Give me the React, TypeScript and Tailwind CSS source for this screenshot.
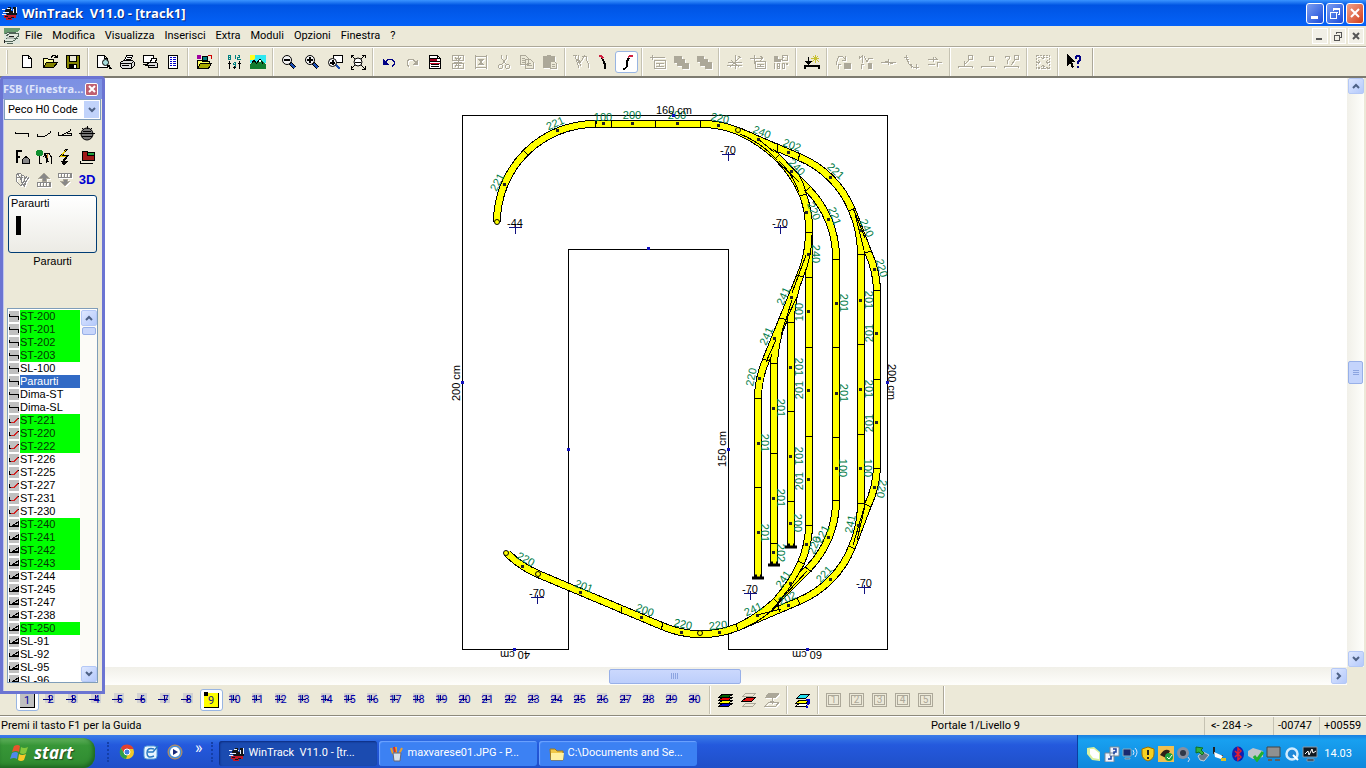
import { Fragment, type ReactNode } from "react";

type IconProps = { children: ReactNode; dim?: boolean };

type Label = [text: string, x: number, y: number, angle: number];

const menus = ["File", "Modifica", "Visualizza", "Inserisci", "Extra", "Moduli", "Opzioni", "Finestra", "?"];

function Icon({ children, dim }: IconProps) {
  return (
    <svg
      viewBox="0 0 16 16"
      aria-hidden
      fill="none"
      shapeRendering="crispEdges"
      className={dim ? "h-4 w-4 text-[#aca899] drop-shadow-[1px_1px_0_white]" : "h-4 w-4 text-black"}
      stroke="currentColor"
    >
      {children}
    </svg>
  );
}

const magnifier = (
  <>
    <path d="M9 9l5 5" stroke="#000" strokeWidth="3" />
    <path d="M10 10l4 4" stroke="#1c4fb4" strokeWidth="2" />
    <circle cx="6" cy="6" r="4.5" fill="#f4f4f4" shapeRendering="auto" />
  </>
);

type Tool = { name: string; icon: ReactNode; dim?: boolean; pressed?: boolean };

const toolGroups: Tool[][] = [
  [
    { name: "Nuovo", icon: <path d="M3.5 1.5h6l3 3v9h-9zM9.5 1.5v3h3" fill="#fff" /> },
    {
      name: "Apri",
      icon: (
        <>
          <path d="M1.5 13.5v-9h4l1 1h5v3" fill="#ffff9c" />
          <path d="M1.5 13.5l3-5h11l-4 5z" fill="#848400" />
          <path d="M9 3.5l2-2h2l2 2m0-3v3h-3" />
        </>
      )
    },
    {
      name: "Salva",
      icon: (
        <>
          <path d="M1.5 1.5h13v13h-12l-1-1z" fill="#848400" />
          <path d="M4.5 2v5h7v-5" fill="#ece9d8" />
          <path d="M4 10h8v4h-8z" fill="#000" stroke="none" />
          <path d="M9 11h2v3h-2z" fill="#fff" stroke="none" />
        </>
      )
    }
  ],
  [
    {
      name: "Anteprima",
      icon: (
        <>
          <path d="M1.5 1.5h7l3 3v9h-10zM8.5 1.5v3h3" fill="#fff" />
          <circle cx="9.5" cy="8.5" r="3" fill="#a6dcdc" shapeRendering="auto" />
          <path d="M12 11l3 4" strokeWidth="2" />
        </>
      )
    },
    {
      name: "Stampa",
      icon: (
        <>
          <path d="M5.5 6.5l2-5h6l-2 5z" fill="#fff" />
          <path d="M1.5 8.5l3-2h9l2 2v3l-3 3h-9l-2-2z" fill="#ddd" />
          <path d="M2 9.5h10v4M8 3.5h4M7 5.5h4M3 11.5h7M12 9.5l3-2" />
        </>
      )
    },
    {
      name: "Stampa finestre",
      icon: (
        <>
          <path d="M1.5 1.5h10v7h-10zM1 10.5h5" fill="#fff" />
          <path d="M8.5 8.5l1-4h5l-1 4z" fill="#fff" />
          <path d="M5.5 9.5l2-1h7l1 1v4h-9zM6 11.5h7M3 11.5h3" fill="#ddd" />
        </>
      )
    },
    {
      name: "Lista",
      icon: (
        <>
          <path d="M3.5 1.5h9v13h-9z" fill="#fff" />
          <path d="M5 3.5h2m1 0h3M5 5.5h2m1 0h3M5 7.5h2m1 0h3M5 9.5h2m1 0h3M5 11.5h2m1 0h3" stroke="#0000c8" />
        </>
      )
    }
  ],
  [
    {
      name: "Libreria",
      icon: (
        <>
          <path d="M1 1h4v4h-4z" fill="#a000a0" stroke="none" />
          <path d="M6.5 2.5h5v4h-5z" fill="#008080" />
          <path d="M12 1.5h3v3" stroke="#d00000" />
          <path d="M1.5 14.5v-8h4l1 1h7v2" fill="#ffff60" />
          <path d="M1.5 14.5l3-5h11l-3 5z" fill="#a8a800" />
        </>
      )
    }
  ],
  [
    {
      name: "Livelli quota",
      icon: (
        <>
          <path d="M1.5 1.5h2v4h-2zM1.5 3.5h2M8.5 1v4M10.5 1.5h2v2h-2v2h3M6.5 8.5h2v4M6.5 8.5v2h2" stroke="#008080" />
          <path d="M2.5 7v8M1 9.5h3M7.5 12v3M6 13.5h3M12.5 7v8M11 9.5h3" />
        </>
      )
    },
    {
      name: "Paesaggio",
      icon: (
        <>
          <path d="M0 1h16v8h-16z" fill="#30e8f0" stroke="none" />
          <path d="M0 1h5v3l-2 2h-3z" fill="#ffff20" stroke="none" />
          <path d="M0 15v-5l4-4 3 3 3-4 6 6v4z" fill="#107c30" stroke="none" />
          <path d="M2 9l2-3 2 3h1l3-4 3 5" />
          <path d="M9 8l1-2 1 2" stroke="#fff" />
        </>
      )
    }
  ],
  [
    { name: "Riduci", icon: <>{magnifier}<path d="M3 6h6" strokeWidth="2" /></> },
    { name: "Ingrandisci", icon: <>{magnifier}<path d="M3 6h6M6 3v6" strokeWidth="2" /></> },
    {
      name: "Zoom finestra",
      icon: (
        <>
          <path d="M6.5 1.5h9v7h-9z" fill="#fff" />
          <path d="M9 11l4 4" stroke="#1c4fb4" strokeWidth="2" />
          <circle cx="5.5" cy="8.5" r="4" fill="#fff" shapeRendering="auto" />
          <path d="M3 8.5h5M5.5 6v5" strokeWidth="2" />
        </>
      )
    },
    {
      name: "Mostra tutto",
      icon: (
        <>
          <path d="M1 4v-3h3M12 1h3v3M15 12v3h-3M4 15h-3v-3M1 1l4 4M15 1l-4 4M1 15l4-4M15 15l-4-4" />
          <circle cx="8" cy="8" r="4" fill="#fff" shapeRendering="auto" />
          <path d="M5 8h6" />
        </>
      )
    }
  ],
  [
    {
      name: "Annulla",
      icon: (
        <>
          <path d="M4 8.5l3-3h4l2 2v3l-2 2" stroke="#000084" />
          <path d="M2 5v6h6z" fill="#000084" stroke="none" />
        </>
      )
    },
    {
      name: "Ripeti",
      dim: true,
      icon: (
        <>
          <path d="M12 8.5l-3-3h-4l-2 2v3l2 2" />
          <path d="M14 5v6h-6z" fill="#aca899" stroke="none" />
        </>
      )
    },
    {
      name: "Proprietà",
      icon: (
        <>
          <path d="M2.5 1.5h8l3 3v10h-11z" fill="#fff" />
          <path d="M3 4h7v3h3v1h-10z" fill="#a00020" stroke="none" />
          <path d="M3 4.5h7M3 7.5h10M4 10.5h8M4 12.5h8M10.5 1.5v3h3" />
          <path d="M3 9h10" stroke="#c00020" />
        </>
      )
    },
    {
      name: "Unisci",
      dim: true,
      icon: <path d="M2.5 1.5h11v5h-11zM2.5 9.5h11v5h-11zM8 1v14M4 8h8M5 4.5h6M5 11.5h6M5 3l2 3M11 3l-2 3M5 13l2-3" />
    },
    {
      name: "Separa",
      dim: true,
      icon: <path d="M2.5 1v14M13.5 1v14M2 2.5h12M2 13.5h12M5 5.5h6M5 10.5h6M6 5l4 6M10 5l-4 6M8 5v6" />
    },
    {
      name: "Taglia",
      dim: true,
      icon: <><path d="M5.5 1v3l5 7M10.5 1v3l-5 7" /><circle cx="4.5" cy="12.5" r="2" /><circle cx="11.5" cy="12.5" r="2" /></>
    },
    {
      name: "Copia",
      dim: true,
      icon: <path d="M1.5 1.5h5l3 3v6h-8zM6.5 5.5h5l3 3v6h-8zM3 4.5h3M3 6.5h3M3 8.5h3M8 9.5h4M8 11.5h5" fill="#ece9d8" />
    },
    {
      name: "Incolla",
      dim: true,
      icon: (
        <>
          <path d="M1.5 2.5h11v11h-11zM5 1.5h4" fill="#aca899" />
          <path d="M8.5 7.5h4l2 2v5h-6zM10 10.5h3M10 12.5h3" fill="#ece9d8" />
        </>
      )
    }
  ],
  [
    { name: "Diramazioni", dim: true, icon: <path d="M0 1.5h4M2 2l4 12M5 1v3l2 5 5-8M9 2.5h4M13.5 2v4l2 4v4M4 5l4 7" /> },
    {
      name: "Curva a destra",
      icon: <><path d="M6 4l2 4 1 3v4" strokeWidth="2" /><path d="M3 1.5h2l2 3" stroke="#d02040" strokeWidth="2" /></>
    },
    {
      name: "Curva flessibile",
      pressed: true,
      icon: <><path d="M4 14.5h2l2-2v-5l2-4" strokeWidth="2" /><path d="M9 3l2-1h3" stroke="#d02040" strokeWidth="2" /></>
    }
  ],
  [
    { name: "Quota", dim: true, icon: <path d="M0 3.5h15M2 1v5M4.5 6.5h11v8h-11zM6 9.5h8M6 12.5h8M9.5 9v3" /> },
    { name: "Porta avanti", dim: true, icon: <path d="M1 2h7v6h-7zM4 5h7v6h-7zM9 9h6v5h-6z" fill="#aca899" /> },
    { name: "Porta indietro", dim: true, icon: <path d="M1 2h6v5h-6zM4 5h7v6h-7zM9 8h6v6h-6z" fill="#aca899" /> }
  ],
  [
    { name: "Sposta", dim: true, icon: <path d="M0 11.5h15M8.5 1v14M1 8h14M3 13l10-10M4 6l8 7M11 2l3 2" /> },
    { name: "Sposta campo", dim: true, icon: <path d="M0 4.5h12M4.5 1v9M10 2l3 2-3 3M5.5 7.5h10v7h-10zM7 10.5h7M7 12.5h7M10.5 10v3" /> },
    {
      name: "Ruota di 180 gradi",
      dim: true,
      icon: (
        <>
          <path d="M1 2h3v3h3v2h-6z" fill="#aca899" />
          <path d="M9.5 1.5h5v5h-5zM8 6l3-3M1.5 9v6M4.5 9.5h2v5h-2zM4.5 12h2M9.5 9.5h2v5h-2zM13.5 9.5h1v1h-1z" />
        </>
      )
    }
  ],
  [
    {
      name: "Nuova quota binario",
      icon: (
        <>
          <path d="M1 15v-3h14v3" strokeWidth="2" />
          <path d="M4.5 3v7" />
          <path d="M1 7h7l-3.5 4z" fill="#000" stroke="none" />
          <path d="M11.5 1v8M7 4.5h8M9 2l6 6M14 2l-6 6" stroke="#c8c030" />
        </>
      )
    }
  ],
  [
    {
      name: "Rampa",
      dim: true,
      icon: (
        <>
          <path d="M1 11v-2l3-7h3l3 3M10 2v4h-3M3 15v-5h3" />
          <path d="M9 9h6v5h-6z" fill="#aca899" />
        </>
      )
    },
    {
      name: "Rampa doppia",
      dim: true,
      icon: <><path d="M1 2v3l3-3v7M6 2l3 6 2-4h4M3 15v-5h3" /><path d="M10 9h3v5h-3z" fill="#aca899" /></>
    },
    { name: "Inserisci giunto", dim: true, icon: <path d="M0 8.5h15M7.5 5v6M4 7.5h3M9 9.5h3" /> },
    { name: "Curva nodo", dim: true, icon: <path d="M2 1v4h3M3 5l2 5 4 3h6M7 10v4M12 10v5M0 3.5h4" /> },
    { name: "Allinea", dim: true, icon: <path d="M1 5.5h9M6 3v5M1 10.5h7M10 8v5M11 8.5h4M8 3l3 3" /> }
  ],
  [
    { name: "Nodo agganciato", dim: true, icon: <path d="M0.5 14v-2h14v2M10.5 1.5h4v4h-4zM11 6l-5 5M6 7v5h5" /> },
    { name: "Nodo libero", dim: true, icon: <path d="M0.5 14v-2h14v2M8.5 2.5h4v4h-4z" /> },
    { name: "Nodo ignoto", dim: true, icon: <path d="M0.5 14v-2h14v2M10.5 1.5h4v4h-4zM1 4v-2h4v3l-2 2v3M11 6l-4 5" /> }
  ],
  [
    {
      name: "Centra",
      dim: true,
      icon: (
        <>
          <path d="M1.5 1.5h13v13h-13z" strokeDasharray="2 1" />
          <path d="M8 1v4M8 11v4M1 8h4M11 8h4M6 3l2 2 2-2M6 13l2-2 2 2M3 6l2 2-2 2M13 6l-2 2 2 2M3 3h2M11 3h2M3 13h2M11 13h2" />
        </>
      )
    }
  ],
  [
    {
      name: "Guida rapida",
      icon: (
        <>
          <path d="M1 0v12l3-3 2 5 2-1-2-5h4z" fill="#000" stroke="none" />
          <path d="M10 5v-2l1-1h2l1 1v3l-2 2v2M12 12v2" stroke="#000084" strokeWidth="2" />
        </>
      )
    }
  ]
];

function Separator() {
  return <span className="mx-[3px] h-7 w-0.5 shrink-0 border-r border-l border-r-white border-l-[#c5c2b2]" />;
}

function ToolButton({ tool }: { tool: Tool }) {
  return (
    <button
      type="button"
      aria-label={tool.name}
      disabled={tool.dim}
      className={
        tool.pressed
          ? "flex h-[22px] w-[23px] shrink-0 items-center justify-center rounded-[3px] border border-[#98b5e2] bg-white"
          : "flex h-[22px] w-[23px] shrink-0 items-center justify-center"
      }
    >
      <Icon dim={tool.dim}>{tool.icon}</Icon>
    </button>
  );
}

function AppLogo() {
  return (
    <svg viewBox="0 0 16 16" className="h-4 w-4 shrink-0" aria-hidden shapeRendering="crispEdges">
      <path d="M3 5l3-3h3v4h2v-4h4v8h-9l-3-2z" fill="#101418" />
      <path d="M0 4.5h3M1 7.5h6M0 9.5h4M11.5 4v4M14.5 2v6M9 4.5h1M5 3.5h3" stroke="#e8f0ff" fill="none" />
      <path d="M2 10h12v3h-4v2h-6v-2h-2z" fill="#c01828" />
      <path d="M3 11.5h3M9 12.5h3M6 13.5h3" stroke="#181018" />
    </svg>
  );
}

function TitleBar() {
  return (
    <header className="flex h-[26px] shrink-0 items-center bg-linear-to-b from-[#3a94ff] via-[#0054e3] via-20% to-[#0562f8] pr-0.5 pl-0.5">
      <AppLogo />
      <h1 className="ml-1 whitespace-pre font-['Open_Sans','Noto_Sans',sans-serif] text-[13px] leading-5 font-bold text-white [text-shadow:1px_1px_0_#0a2a80]">
        {"WinTrack  V11.0 - [track1]"}
      </h1>
      <div className="ml-auto flex gap-0.5">
        <button type="button" aria-label="Riduci a icona" className="flex h-[21px] w-[18px] items-end rounded-[3px] border border-white bg-linear-to-br from-[#7c9df0] to-[#1c48d8] p-1">
          <span className="h-[3px] w-[7px] bg-white" />
        </button>
        <button type="button" aria-label="Ripristina" className="flex h-[21px] w-[18px] items-center justify-center rounded-[3px] border border-white bg-linear-to-br from-[#7c9df0] to-[#1c48d8]">
          <svg viewBox="0 0 12 12" className="h-3 w-3" fill="none" stroke="#fff" shapeRendering="crispEdges">
            <path d="M4 1.5h7M4 2.5h7M4.5 1v3M10.5 2v5h-2M1 5h7.5M1.5 5v6h6v-6" />
          </svg>
        </button>
        <button type="button" aria-label="Chiudi" className="flex h-[21px] w-[18px] items-center justify-center rounded-[3px] border border-white bg-linear-to-br from-[#f0a088] to-[#d03a10]">
          <svg viewBox="0 0 12 12" className="h-3 w-3" stroke="#fff" strokeWidth="2">
            <path d="M2 2l8 8M10 2l-8 8" />
          </svg>
        </button>
      </div>
    </header>
  );
}

function MenuBar() {
  return (
    <nav className="flex h-[21px] shrink-0 items-center border-b border-[#aca899] pl-1">
      <svg viewBox="0 0 16 16" className="h-4 w-4 shrink-0" aria-hidden shapeRendering="crispEdges">
        <path d="M0 0h16v16h-16z" fill="#dfe6dc" />
        <path d="M0 0h16v2l-3 2h-9l-4 2z" fill="#6a9c70" />
        <path d="M1 6l4-2h7M2 8l5-3h7l1 3-5 3-8-1M1 13h8l5-3M3 15h6" stroke="#506458" fill="none" />
        <path d="M3 9h7v2h-7z" fill="#b4bcb4" />
        <path d="M0 15v-3M5 8h5" stroke="#202020" />
      </svg>
      {menus.map((menu) => (
        <button key={menu} type="button" className="h-5 px-[5px] text-[11px] leading-5">
          {menu}
        </button>
      ))}
      <div className="ml-auto flex gap-0.5 pr-0.5">
        <button type="button" aria-label="Riduci documento" className="flex h-4 w-4 items-end border border-white bg-[#f1efe6] p-[3px]">
          <span className="h-0.5 w-1.5 bg-[#555]" />
        </button>
        <button type="button" aria-label="Ripristina documento" className="flex h-4 w-4 items-center justify-center border border-white bg-[#f1efe6]">
          <svg viewBox="0 0 12 12" className="h-3 w-3" fill="none" stroke="#555" shapeRendering="crispEdges">
            <path d="M4 2.5h6M4.5 2v2M9.5 2v5h-2M2 5.5h6M2.5 5v5h5v-5" />
          </svg>
        </button>
        <button type="button" aria-label="Chiudi documento" className="flex h-4 w-4 items-center justify-center border border-white bg-[#f1efe6]">
          <svg viewBox="0 0 12 12" className="h-3 w-3" stroke="#555" strokeWidth="2">
            <path d="M3 3l6 6M9 3l-6 6" />
          </svg>
        </button>
      </div>
    </nav>
  );
}

// Closed outline of the U-shaped baseboard
const board = "M462.5 115.5H887.5V649.5H728.5V249.5H568.5V649.5H462.5Z";

const tracks = [
  "M497 222A98 98 0 0 1 595 124H701A98 98 0 0 1 738 131",
  "M777 157Q794 174 803 195A98 98 0 0 1 809 232",
  "M738 131Q760 141 777 157L808 189A98 98 0 0 1 836 258",
  "M738 131L799 157A98 98 0 0 1 852 210",
  "M852 210Q861 231 861 255",
  "M852 210L868 252A98 98 0 0 1 877 289V468A98 98 0 0 1 868 505",
  "M861 503Q861 527 852 547",
  "M868 505L852 547",
  "M809 232V277",
  "M791 322Q791 298 800 276",
  "M774 363Q775 339 784 319",
  "M809 232Q809 256 800 276L766 360A98 98 0 0 0 758 398",
  "M758 398V579",
  "M774 363V565",
  "M791 322V547",
  "M809 277V525A98 98 0 0 1 801 563Q792 583 776 601",
  "M861 254V503",
  "M836 258V499A98 98 0 0 1 808 569L776 601Q759 617 738 627",
  "M852 547A98 98 0 0 1 799 601L738 627A98 98 0 0 1 662 626L538 574A98 98 0 0 1 507 553"
];

// Rail edges that stay visible where the points overlap
const switchLines =
  "M738 127L779 145M740 134Q762 143 777 160M757 138L774 152M777 161L799 182M779 161Q792 173 799 192M797 172Q804 182 806 193M853 208L865 238M855 214L864 250M812 235Q812 256 803 278M806 255L792 293M797 297L787 318M792 300L781 335M776 340L766 362M864 508L853 545M865 506L857 540M803 566Q794 584 778 602M807 571L775 606M740 630Q765 619 779 604M757 615L781 609";

const joints =
  "M595 120v8M597 121l-2 6M611 120v8M655 120v8M700 120v8M523 150l6 6M778 145l-1 7M800 153l-2 7M774 160l6-6M805 192l6-6M849 211l6-3M864 253l8-2M873 290h8M799 196l8-2M805 232h8M832 259h8M857 254h8M805 277h8M796 275l8 2M780 318l8 2M762 359l8 2M754 398h8M787 322h8M770 363h8M754 487h8M770 453h8M770 543h8M787 411h8M787 501h8M805 347h8M805 436h8M805 525h8M832 347h8M832 437h8M832 500h8M857 344h8M857 434h8M857 503h8M873 379h8M873 468h8M864 504l8 3M848 546l8 3M797 561l8 3M805 567l7 5M773 598l6 6M797 598l3 6M778 606l2 6M736 623l2 7M661 630l2-7M621 614l1-7";

const sensors: [number, number][] = [
  [504, 184], [557, 130], [603, 123], [632, 123], [677, 123], [718, 125], [758, 139], [788, 152], [830, 177],
  [791, 171], [828, 219], [806, 212], [808, 254], [860, 230], [874, 269], [791, 297], [808, 311], [774, 338],
  [759, 378], [758, 443], [758, 532], [773, 408], [773, 498], [773, 552], [790, 367], [790, 456], [790, 523],
  [808, 390], [808, 479], [806, 544], [836, 303], [836, 393], [836, 468], [828, 537], [860, 300], [860, 389],
  [860, 468], [876, 333], [876, 422], [874, 487], [858, 525], [830, 579], [790, 583], [788, 605], [757, 615],
  [719, 632], [681, 632], [641, 617], [580, 592], [522, 566]
];

const openEnds: [number, number][] = [[497, 222], [738, 130], [506, 553], [538, 574], [700, 633]];

const partLabels: Label[] = [
  ["221", 497, 182, -62],
  ["221", 555, 123, -24],
  ["100", 603, 117, 0],
  ["200", 632, 115, 0],
  ["200", 677, 115, 0],
  ["220", 720, 118, 12],
  ["240", 762, 132, 22],
  ["202", 792, 145, 20],
  ["221", 836, 171, 42],
  ["240", 797, 167, 45],
  ["221", 835, 216, 70],
  ["220", 814, 211, 68],
  ["240", 867, 228, 65],
  ["220", 882, 268, 75],
  ["240", 816, 254, 90],
  ["241", 783, 296, -66],
  ["241", 766, 336, -66],
  ["220", 751, 377, -78],
  ["100", 799, 312, -90],
  ["201", 844, 303, 90],
  ["201", 869, 300, 90],
  ["201", 869, 333, -90],
  ["201", 799, 367, 90],
  ["201", 799, 390, -90],
  ["201", 844, 393, 90],
  ["201", 869, 389, 90],
  ["201", 869, 423, -90],
  ["201", 781, 408, 90],
  ["201", 765, 443, 90],
  ["201", 799, 456, 90],
  ["201", 799, 481, -90],
  ["100", 843, 468, 90],
  ["100", 868, 468, 90],
  ["220", 882, 489, 100],
  ["201", 781, 498, 90],
  ["200", 798, 523, 90],
  ["241", 850, 524, -78],
  ["201", 765, 533, 90],
  ["202", 781, 553, 90],
  ["221", 822, 534, -64],
  ["220", 814, 545, -68],
  ["221", 824, 574, -48],
  ["241", 783, 579, -56],
  ["202", 787, 598, -25],
  ["241", 753, 609, -25],
  ["220", 718, 625, -6],
  ["220", 683, 624, 12],
  ["200", 645, 610, 20],
  ["201", 584, 586, 20],
  ["220", 526, 559, 28]
];

const boardLabels: Label[] = [
  ["160 cm", 674, 110, 0],
  ["200 cm", 456, 383, -90],
  ["200 cm", 892, 382, 90],
  ["150 cm", 722, 449, -90],
  ["40 cm", 515, 655, 180],
  ["60 cm", 807, 655, 180]
];

const boardHandles: [number, number][] = [
  [673, 115], [462, 382], [887, 382], [728, 449], [568, 449], [648, 248], [514, 649], [807, 649]
];

const heights: [string, number, number][] = [
  ["-44", 515, 227],
  ["-70", 728, 154],
  ["-70", 780, 227],
  ["-70", 537, 597],
  ["-70", 750, 593],
  ["-70", 864, 587]
];

const bumpers: [number, number][] = [[758, 578], [774, 565], [791, 547]];

function PlanLabel({ label: [text, x, y, angle] }: { label: Label }) {
  return (
    <text x={x} y={y + 4} textAnchor="middle" transform={`rotate(${angle} ${x} ${y})`}>
      {text}
    </text>
  );
}

function TrackPlan() {
  return (
    <svg
      viewBox="0 78 1347 589"
      role="img"
      aria-label="Piano binari"
      className="min-h-0 w-full min-w-0 flex-1 font-['Liberation_Sans',Arial,sans-serif] text-[11px]"
    >
      <path d={board} fill="none" stroke="#000" shapeRendering="crispEdges" />
      <g fill="none" shapeRendering="crispEdges">
        {tracks.map((d) => (
          <path key={d} d={d} stroke="#000" strokeWidth="8" />
        ))}
        {tracks.map((d) => (
          <path key={d} d={d} stroke="#ff0" strokeWidth="6" />
        ))}
        <path d={switchLines} stroke="#000" />
        <path d={joints} stroke="#000" />
      </g>
      {sensors.map(([x, y]) => (
        <rect key={`${x}-${y}`} x={x - 1} y={y - 1} width="3" height="3" fill="#222" shapeRendering="crispEdges" />
      ))}
      {openEnds.map(([x, y]) => (
        <circle key={`${x}-${y}`} cx={x} cy={y} r="2.5" fill="#ff0" stroke="#000" />
      ))}
      {bumpers.map(([x, y]) => (
        <path key={x} d={`M${x - 6} ${y}h12M${x - 3} ${y - 2}h2M${x + 2} ${y - 2}h2`} stroke="#000" strokeWidth="3" />
      ))}
      <g fill="#007b46">
        {partLabels.map((label) => (
          <PlanLabel key={label.join()} label={label} />
        ))}
      </g>
      {boardLabels.map((label) => (
        <PlanLabel key={label.join()} label={label} />
      ))}
      {boardHandles.map(([x, y]) => (
        <rect key={`${x}-${y}`} x={x - 1} y={y - 1} width="3" height="3" fill="#1010c0" />
      ))}
      {heights.map(([text, x, y]) => (
        <Fragment key={`${x}-${y}`}>
          <text x={x} y={y} textAnchor="middle">{text}</text>
          <path d={`M${x - 6} ${y + 0.5}h13M${x + 0.5} ${y - 2}v9`} stroke="#101080" shapeRendering="crispEdges" />
        </Fragment>
      ))}
    </svg>
  );
}

const chevrons = {
  up: "M2 7l3-3 3 3",
  down: "M2 3l3 3 3-3",
  right: "M3 2l3 3-3 3"
};

function ScrollArrow({ name, dir }: { name: string; dir: keyof typeof chevrons }) {
  return (
    <button
      type="button"
      aria-label={name}
      className="flex h-4 w-4 shrink-0 items-center justify-center rounded-[2px] border border-[#b4c8f6] bg-linear-to-br from-[#dfe8ff] to-[#b4c9fb]"
    >
      <svg viewBox="0 0 10 10" className="h-2.5 w-2.5" fill="none" stroke="#4d6185" strokeWidth="2">
        <path d={chevrons[dir]} />
      </svg>
    </button>
  );
}

type Part = { name: string; kind: "straight" | "curve" | "points"; used?: boolean };

const parts: Part[] = [
  { name: "ST-200", kind: "straight", used: true },
  { name: "ST-201", kind: "straight", used: true },
  { name: "ST-202", kind: "straight", used: true },
  { name: "ST-203", kind: "straight", used: true },
  { name: "SL-100", kind: "straight" },
  { name: "Paraurti", kind: "straight" },
  { name: "Dima-ST", kind: "straight" },
  { name: "Dima-SL", kind: "straight" },
  { name: "ST-221", kind: "curve", used: true },
  { name: "ST-220", kind: "curve", used: true },
  { name: "ST-222", kind: "curve", used: true },
  { name: "ST-226", kind: "curve" },
  { name: "ST-225", kind: "curve" },
  { name: "ST-227", kind: "curve" },
  { name: "ST-231", kind: "curve" },
  { name: "ST-230", kind: "curve" },
  { name: "ST-240", kind: "points", used: true },
  { name: "ST-241", kind: "points", used: true },
  { name: "ST-242", kind: "points", used: true },
  { name: "ST-243", kind: "points", used: true },
  { name: "ST-244", kind: "points" },
  { name: "ST-245", kind: "points" },
  { name: "ST-247", kind: "points" },
  { name: "ST-238", kind: "points" },
  { name: "ST-250", kind: "points", used: true },
  { name: "SL-91", kind: "points" },
  { name: "SL-92", kind: "points" },
  { name: "SL-95", kind: "points" },
  { name: "SL-96", kind: "points" }
];

function rowColors(part: Part) {
  if (part.name === "Paraurti") return "min-w-0 flex-1 bg-[#316ac5] text-white";
  if (part.used) return "min-w-0 flex-1 bg-[#00ff00] text-[#053805]";
  return "min-w-0 flex-1 text-black";
}

function PartIcon({ kind }: { kind: Part["kind"] }) {
  return (
    <svg viewBox="0 0 11 13" className="h-[13px] w-[11px] shrink-0" aria-hidden fill="none" stroke="#000" shapeRendering="crispEdges">
      <path d="M0 1h10v11h-10z" fill="#c0c0c0" stroke="none" />
      {kind === "straight" && <path d="M0.5 4v2.5h9v3" />}
      {kind === "curve" && (
        <>
          <path d="M0.5 5v3.5h3M8 4.5h2" />
          <path d="M2 8.5h3l4-4" stroke="#d02020" />
        </>
      )}
      {kind === "points" && <path d="M0.5 5v3.5h9M9.5 3v6M3 8l6-4M5 7.5h4" />}
    </svg>
  );
}

const paletteIcons: Tool[] = [
  { name: "Binari diritti", icon: <path d="M1 5.5v2h13v3" /> },
  { name: "Binari curvi", icon: <path d="M1.5 8v2.5h7l6-4v-2" /> },
  { name: "Scambi", icon: <path d="M1.5 6v3.5h13v-3M5 9l8-4v-2M10 7.5h4" /> },
  {
    name: "Piattaforme",
    icon: <><circle cx="8" cy="8" r="6" fill="#777" shapeRendering="auto" /><path d="M0 7.5h16M3 10.5h10M8 0v3M3 2l2 2M13 2l-2 2M4 5.5h8" /></>
  },
  {
    name: "Edifici",
    icon: <><path d="M2.5 14v-12h5M2 7.5h4" strokeWidth="2" /><path d="M8.5 14.5v-4l3.5-3 3.5 3v4z" fill="#888" /></>
  },
  {
    name: "Vegetazione",
    icon: (
      <>
        <path d="M3.5 7v7h2M8 4.5h5l2 3v7M9.5 4l-2 4M10.5 9v5" />
        <path d="M9 5l3 8" strokeWidth="2" />
        <circle cx="3.5" cy="4" r="3.5" fill="#109030" stroke="none" />
        <path d="M11.5 5v4" stroke="#d08020" />
      </>
    )
  },
  {
    name: "Elettrico",
    icon: (
      <>
        <path d="M10 0L4 7h6l-4 6" strokeWidth="2" />
        <path d="M9 1L4 7h5" stroke="#f0d000" />
        <path d="M4 12h7l-4 4z" fill="#000" />
      </>
    )
  },
  {
    name: "Veicoli",
    icon: (
      <>
        <path d="M3 2h5v4h7v5h-12z" fill="#a01818" />
        <path d="M8 3h7v3h-7z" fill="#20a040" />
        <path d="M1 14.5h13M1 12v3" />
      </>
    )
  },
  { name: "Disegno", dim: true, icon: <path d="M2 3l3-2 5 3v6l-3 4-5-5zM4 2l4 8M3 6l6-1M7 2v9M9 14l6-9M8 12l5-8M13 8l-3 7" stroke="#888" /> },
  { name: "Alza", dim: true, icon: <><path d="M8 1l5 5h-3v3h-4v-3h-3z" fill="#888" /><path d="M1.5 10.5h13v4h-13zM4 11v3M7 11v3M10 11v3M13 11v3" stroke="#888" /></> },
  { name: "Abbassa", dim: true, icon: <><path d="M8 14l5-5h-3v-2h-4v2h-3z" fill="#888" /><path d="M1.5 1.5h13v4h-13zM4 2v3M7 2v3M10 2v3M13 2v3" stroke="#888" /></> }
];

function PartsWindow() {
  return (
    <aside className="absolute -top-0.5 left-0 flex h-[618px] w-[105px] flex-col rounded-t-[4px] border-[3px] border-[#6b74d2] bg-[#ece9d8] shadow-[inset_1px_0_0_#c0c6f0]">
      <div className="flex h-5 shrink-0 items-center justify-between bg-linear-to-b from-[#7c90e4] to-[#8296e0] pr-1">
        <h2 className="whitespace-nowrap font-['Open_Sans','Noto_Sans',sans-serif] text-[11px] leading-5 font-bold text-[#dfe5fb]">
          FSB (Finestra...
        </h2>
        <button type="button" aria-label="Chiudi FSB" className="flex h-[13px] w-[13px] shrink-0 items-center justify-center rounded-[2px] border border-white bg-[#c06070]">
          <svg viewBox="0 0 10 10" className="h-2.5 w-2.5" stroke="#fff" strokeWidth="2">
            <path d="M2 2l6 6M8 2l-6 6" />
          </svg>
        </button>
      </div>
      <div className="relative mx-px shrink-0">
        <select
          aria-label="Catalogo"
          className="block h-[21px] w-full appearance-none border border-[#7f9db9] bg-white pl-[3px] text-[11px] leading-[19px] outline-none"
        >
          <option>Peco H0 Code</option>
        </select>
        <span className="pointer-events-none absolute top-0.5 right-0.5 flex h-[17px] w-[15px] items-center justify-center bg-[#c1d3fb]">
          <svg viewBox="0 0 10 10" className="h-2.5 w-2.5" fill="none" stroke="#4d6185" strokeWidth="2">
            <path d={chevrons.down} />
          </svg>
        </span>
      </div>
      <div className="mt-0.5 mr-1 ml-2 grid shrink-0 grid-cols-4">
        {paletteIcons.map((tool) => (
          <button key={tool.name} type="button" aria-label={tool.name} className="flex h-[23px] items-center justify-center">
            <Icon dim={tool.dim}>{tool.icon}</Icon>
          </button>
        ))}
        <button type="button" className="flex h-[23px] items-center justify-center font-['Liberation_Sans',Arial,sans-serif] text-[13px] font-bold text-[#0000d0]">
          3D
        </button>
      </div>
      <button
        type="button"
        className="mx-[5px] mt-1 flex h-[58px] shrink-0 flex-col items-start rounded-[3px] border border-[#003c74] bg-linear-to-b from-white to-[#ecebe5] px-0.5 font-['Liberation_Sans',Arial,sans-serif] text-[11px] leading-[14px]"
      >
        Paraurti
        <span className="mt-1.5 ml-[5px] h-[19px] w-[5px] bg-black" />
      </button>
      <p className="shrink-0 pt-px text-center font-['Liberation_Sans',Arial,sans-serif] text-[11px] leading-[14px]">Paraurti</p>
      <div className="mx-1 mt-auto mb-2 flex h-[375px] shrink-0 border border-[#7f9db9] bg-white pt-px">
        <ul className="min-w-0 flex-1 overflow-hidden font-['Liberation_Sans',Arial,sans-serif] text-[11px] leading-[13px]">
          {parts.map((part) => (
            <li key={part.name} className="flex h-[13px] pl-px">
              <PartIcon kind={part.kind} />
              <span className={rowColors(part)}>{part.name}</span>
            </li>
          ))}
        </ul>
        <div className="flex w-[17px] flex-col items-center bg-[#fcfbf7]">
          <ScrollArrow name="Scorri elenco su" dir="up" />
          <span className="mt-px h-2 w-3.5 rounded-[2px] border border-[#98b0e8] bg-[#c8d6fb]" />
          <span className="flex-1" />
          <ScrollArrow name="Scorri elenco giù" dir="down" />
        </div>
      </div>
    </aside>
  );
}

const levels = Array.from({ length: 30 }, (_, index) => index + 1);

function LevelButton({ level }: { level: number }) {
  if (level === 9) {
    return (
      <button type="button" aria-pressed="true" className="relative flex h-[22px] w-[23px] shrink-0 items-center justify-center rounded-[3px] border border-[#98b5e2] bg-white">
        <span className="h-[15px] w-[15px] border-r border-b border-black bg-[#ffff00] text-[11px] leading-[15px] text-[#202080]">9</span>
        <span className="absolute top-0.5 left-[3px] h-1 w-1 bg-black" />
      </button>
    );
  }
  if (level === 1) {
    return (
      <button type="button" className="flex h-[22px] w-[23px] shrink-0 items-center justify-center rounded-[3px] border border-[#98b5e2] bg-white">
        <span className="h-[15px] w-[15px] border-r border-b border-black bg-[#c0c0c0] text-[11px] leading-[15px] text-[#0000a0]">1</span>
      </button>
    );
  }
  return (
    <button type="button" className="relative flex h-[22px] w-[23px] shrink-0 items-center justify-center text-[11px] leading-[22px] text-[#0000a8]">
      <span className="absolute top-1 left-1.5 h-2.5 w-2.5 bg-[#d2d1d2]" />
      <span className={level < 10 ? "absolute top-2.5 left-1 h-px w-2.5 bg-[#000080]" : "absolute top-2.5 left-1.5 h-px w-2 bg-[#000080]"} />
      <span className="absolute top-1.5 left-2.5 h-1.5 w-px bg-[#000080]" />
      <span className="relative">{level}</span>
    </button>
  );
}

function LayerStack({ colors }: { colors: string[] }) {
  return (
    <>
      {colors.map((color, index) => (
        <path key={color} d={`M1 ${14 - index * 3}l4-3h10l-4 3z`} fill={color} />
      ))}
    </>
  );
}

function LevelBar() {
  return (
    <div role="toolbar" aria-label="Livelli" className="flex h-[31px] shrink-0 items-center border-b border-[#8d8a7c] bg-[#ece9d8] pl-4">
      {levels.map((level) => (
        <LevelButton key={level} level={level} />
      ))}
      <Separator />
      <button type="button" aria-label="Tutti i livelli" className="flex h-[22px] w-[23px] items-center justify-center">
        <Icon><LayerStack colors={["#0000d0", "#ffff00", "#e00000", "#006000"]} /></Icon>
      </button>
      <button type="button" aria-label="Livello attivo" className="flex h-[22px] w-[23px] items-center justify-center">
        <Icon>
          <path d="M2 4l3-3h10l-3 3zM2 14l3-3h10l-3 3z" stroke="#aca899" />
          <path d="M1 9l5-4h9l-4 4z" fill="#e01010" />
        </Icon>
      </button>
      <button type="button" aria-label="Sposta livello" disabled className="flex h-[22px] w-[23px] items-center justify-center">
        <Icon dim>
          <path d="M2 5l3-4h10l-3 4z" fill="#aca899" />
          <path d="M1 14l4-4h10l-3 4zM8 6v6M6 9h4" />
        </Icon>
      </button>
      <Separator />
      <button type="button" aria-label="Informazioni livello" className="flex h-[22px] w-[23px] items-center justify-center">
        <Icon>
          <LayerStack colors={["#ffffff", "#ffff00"]} />
          <path d="M2 6l4-4h9l-4 4z" fill="#20e0f0" />
          <path d="M11 8h3v3h-1v2M12 14v2" stroke="#0000d0" strokeWidth="2" />
        </Icon>
      </button>
      <Separator />
      {[1, 2, 3, 4, 5].map((view) => (
        <button key={view} type="button" disabled className="flex h-[22px] w-[23px] items-center justify-center">
          <span className="flex h-[14px] w-[15px] items-center justify-center border-[3px] border-double border-[#aca899] text-[10px] leading-[10px] text-[#aca899]">
            {view}
          </span>
        </button>
      ))}
      <span className="ml-1.5 h-7 w-0.5 border-r border-l border-r-white border-l-[#aca899]" />
    </div>
  );
}

const trayIcons: { name: string; art: ReactNode }[] = [
  { name: "Nota", art: <><path d="M1 2l7-1 6 5v9l-8-1-5-6z" fill="#d8f0a0" /><path d="M4 3h4l5 4v6l-6-1-3-4z" fill="#fff" /></> },
  { name: "Guida", art: <><path d="M6 1h9v9h-9zM1 7h9v9h-9z" fill="#f0f4ff" stroke="#789" /><path d="M9 3h3v3h-2v2M4 13h3v-3" stroke="#1840a0" fill="none" strokeWidth="1.5" /></> },
  { name: "Rete senza fili", art: <><path d="M1 3h8v7h-8zM3 12h5v1h-5z" fill="#182870" stroke="#8ab" /><path d="M11 4q2 3 0 5M13 2q4 4 0 9" fill="none" stroke="#dfe8ff" /></> },
  { name: "Avvisi", art: <><path d="M8 1l6 2v5q0 5-6 7-6-2-6-7v-5z" fill="#f8d020" stroke="#a07000" /><path d="M8 4v5M8 11v2" stroke="#222" strokeWidth="2" /></> },
  { name: "Antivirus", art: <><path d="M0 0h16v16h-16z" fill="#f0c050" /><path d="M2 9q5-8 10-4l-4 7z" fill="#302018" /><circle cx="11" cy="11" r="4" fill="#20a040" /><path d="M9 11l2 2 3-4" stroke="#fff" fill="none" /></> },
  { name: "Volume", art: <><circle cx="7" cy="7" r="6" fill="#8890a0" /><circle cx="7" cy="7" r="3" fill="#303848" /><path d="M12 11q3 2 0 5" stroke="#d8e0f0" fill="none" /></> },
  { name: "Rimozione sicura", art: <><path d="M4 10l5-4 6 3-5 6-4-1z" fill="#687888" stroke="#c8d0d8" /><path d="M2 1v6l3-1 3 3 2-2-3-3 2-2z" fill="#30b040" stroke="#107020" /></> },
  { name: "Cavo", art: <><path d="M2 1v6l8 5M5 10h6" stroke="#202020" strokeWidth="2" fill="none" /><path d="M2 6l9 4-2 3-6-2z" fill="#fff" /><path d="M9 12h5v3h-5z" fill="#e0c020" /></> },
  { name: "Bluetooth", art: <><ellipse cx="8" cy="8" rx="6" ry="7.5" fill="#1020b0" /><path d="M5 5l6 6-3 3v-12l3 3-6 6" stroke="#e02030" fill="none" strokeWidth="1.5" /></> },
  { name: "Disco pronto", art: <><path d="M0 5l5-3 10 3v6l-10 2-5-3z" fill="#c0c4c8" /><path d="M6 10l3 4 6-8" stroke="#20b030" strokeWidth="3" fill="none" /></> },
  { name: "Schermo", art: <><path d="M1 1h13v10h-13z" fill="#909090" stroke="#444" /><path d="M2 13h4v2h-4zM9 13h5v2h-5z" fill="#606060" /></> },
  { name: "QuickTime", art: <><circle cx="8" cy="8" r="5.5" fill="#2088d8" stroke="#d0ecff" strokeWidth="2.5" /><path d="M9 9l5 5" stroke="#fff" strokeWidth="2" /></> },
  { name: "Monitor attività", art: <><path d="M1 1h14v10h-14zM5 13h7v2h-7z" fill="#101820" stroke="#89a" /><path d="M3 8l3-3 1 4 3-6 1 4 3-2" stroke="#fff" fill="none" /></> }
];

function TaskBar() {
  return (
    <footer className="flex h-[33px] shrink-0 items-stretch bg-linear-to-b from-[#3b7ce8] via-[#2459dd] via-30% to-[#1f4fc8] text-[11px] text-white">
      <button
        type="button"
        className="mt-[3px] flex w-[95px] shrink-0 items-center rounded-r-xl bg-linear-to-b from-[#5fb05c] via-[#379637] via-25% to-[#2f8a30] pl-2.5 shadow-[inset_-2px_-2px_4px_#1c6420]"
      >
        <svg viewBox="0 0 20 20" className="mr-1 h-5 w-5" aria-hidden>
          <path d="M4 3q4-2 6 0l-1 6q-3-2-7 0z" fill="#e8542c" />
          <path d="M11 4q3 2 7 0l-2 6q-3 2-6 0z" fill="#84c83c" />
          <path d="M2 10q4-2 6 0l-1 6q-3-2-7 0z" fill="#5088ec" />
          <path d="M9 11q3 2 7 0l-2 6q-3 2-6 0z" fill="#f8c828" />
        </svg>
        <span className="font-['Open_Sans','Noto_Sans',sans-serif] text-[17px] leading-6 font-bold italic [text-shadow:1px_1px_1px_#204820]">start</span>
      </button>
      <div className="flex items-center gap-2 pl-3">
        <span className="h-5 border-l-2 border-dotted border-[#143fa8]" />
        <button type="button" aria-label="Chrome" className="ml-0.5 h-4 w-4">
          <svg viewBox="0 0 16 16">
            <circle cx="8" cy="8" r="7" fill="#f0c828" />
            <path d="M2 4a7 7 0 0 1 12.5 1h-6.5l-3 4z" fill="#e04030" />
            <path d="M2 4l3.5 6 3 1-1.5 4a7 7 0 0 1-5-11z" fill="#30a048" />
            <circle cx="8" cy="8" r="3" fill="#4080e0" stroke="#fff" />
          </svg>
        </button>
        <button type="button" aria-label="Mostra desktop" className="h-4 w-4">
          <svg viewBox="0 0 16 16">
            <rect x="1" y="2" width="13" height="13" rx="3" fill="#e8f4ff" stroke="#58a0d8" />
            <path d="M11 5q-7-2-7 4t7 3M5 8h5l5-6" fill="none" stroke="#2878c0" strokeWidth="1.5" />
          </svg>
        </button>
        <button type="button" aria-label="Lettore multimediale" className="h-4 w-4">
          <svg viewBox="0 0 16 16">
            <circle cx="8" cy="8" r="7" fill="#4890d8" stroke="#d09040" />
            <circle cx="8" cy="8" r="5" fill="#fff" />
            <path d="M6 5l5 3-5 3z" fill="#182878" />
          </svg>
        </button>
        <span className="ml-1 pb-2 text-[16px] leading-4">»</span>
        <span className="h-5 border-l-2 border-dotted border-[#143fa8]" />
      </div>
      <div className="ml-1.5 flex min-w-0 items-center gap-0.5 pt-1">
        <button type="button" className="flex h-[25px] w-[158px] items-center rounded-[3px] bg-[#1b4bb0] pl-2.5 text-left whitespace-pre shadow-[inset_1px_1px_2px_#0c2c80]">
          <AppLogo />
          <span className="ml-1">{"WinTrack  V11.0 - [tr..."}</span>
        </button>
        <button type="button" className="flex h-[25px] w-[158px] items-center rounded-[3px] bg-[#3c81f3] pl-2.5 text-left whitespace-nowrap shadow-[inset_1px_1px_1px_#6ea4ff]">
          <svg viewBox="0 0 16 16" className="h-4 w-4 shrink-0">
            <path d="M4 8l-2-6M7 8v-7M10 8l3-6" stroke="#e8a030" strokeWidth="2" />
            <path d="M6 6l-1-5" stroke="#e03020" strokeWidth="2" />
            <path d="M4 7h8l-1 8h-6z" fill="#d8e0e8" stroke="#667" />
          </svg>
          <span className="ml-[3px]">maxvarese01.JPG - P...</span>
        </button>
        <button type="button" className="flex h-[25px] w-[158px] items-center rounded-[3px] bg-[#3c81f3] pl-2.5 text-left whitespace-nowrap shadow-[inset_1px_1px_1px_#6ea4ff]">
          <svg viewBox="0 0 16 16" className="h-4 w-4 shrink-0">
            <path d="M1 3h5l2 2h6v9h-12z" fill="#f0c848" stroke="#a07818" />
            <path d="M2 7h13l-1 7h-12z" fill="#fff0a0" />
          </svg>
          <span className="ml-[3px]">C:\Documents and Se...</span>
        </button>
      </div>
      <div className="ml-auto flex shrink-0 items-center gap-0.5 border-l border-[#0b3fa0] bg-linear-to-b from-[#1a7fe0] via-[#18a0f0] via-15% to-[#0f88dc] pt-1 pr-3.5 pl-2">
        {trayIcons.map((icon) => (
          <svg key={icon.name} viewBox="0 0 16 16" role="img" aria-label={icon.name} className="h-4 w-4">
            {icon.art}
          </svg>
        ))}
        <time className="ml-1 leading-4">14.03</time>
      </div>
    </footer>
  );
}

export default function App() {
  return (
    <div className="flex h-screen min-h-[700px] flex-col overflow-hidden bg-[#ece9d8] font-['Roboto','Noto_Sans',sans-serif] text-[11px] text-black">
      <TitleBar />
      <MenuBar />
      <div role="toolbar" aria-label="Strumenti" className="flex h-[31px] shrink-0 items-center border-t border-b-2 border-t-white border-b-[#7d7b70] pl-1.5">
        <span className="mr-[7px] h-6 w-0.5 border-r border-l border-r-[#c5c2b2] border-l-white" />
        {toolGroups.map((group, index) => (
          <Fragment key={group[0].name}>
            {index > 0 && <Separator />}
            {group.map((tool) => (
              <ToolButton key={tool.name} tool={tool} />
            ))}
          </Fragment>
        ))}
        <span className="ml-[7px] h-7 w-0.5 border-r border-l border-r-white border-l-[#aca899]" />
      </div>

      <main className="relative z-10 flex min-h-0 flex-1 bg-white">
        <div className="flex min-w-0 flex-1 flex-col">
          <TrackPlan />
          <div className="flex h-[18px] shrink-0 items-center bg-linear-to-b from-[#f1f0e9] to-[#fefefb]">
            <div className="flex flex-1 justify-center">
              <div className="ml-[18px] flex h-[15px] w-[132px] items-center justify-center gap-px rounded-[2px] border border-[#98b0e8] bg-linear-to-b from-[#cbd8fd] to-[#bccefb]">
                <span className="h-1.5 w-px bg-[#8ca4e0]" />
                <span className="h-1.5 w-px bg-[#8ca4e0]" />
                <span className="h-1.5 w-px bg-[#8ca4e0]" />
                <span className="h-1.5 w-px bg-[#8ca4e0]" />
              </div>
            </div>
            <ScrollArrow name="Scorri a destra" dir="right" />
          </div>
        </div>
        <div className="flex w-[17px] shrink-0 flex-col items-center bg-linear-to-r from-[#f1f0e9] to-[#fefefb]">
          <ScrollArrow name="Scorri su" dir="up" />
          <div className="flex flex-1 flex-col justify-center">
            <div className="flex h-[23px] w-[15px] flex-col items-center justify-center gap-px rounded-[2px] border border-[#98b0e8] bg-[#c4d4fc]">
              <span className="h-px w-1.5 bg-[#8ca4e0]" />
              <span className="h-px w-1.5 bg-[#8ca4e0]" />
              <span className="h-px w-1.5 bg-[#8ca4e0]" />
            </div>
          </div>
          <ScrollArrow name="Scorri giù" dir="down" />
          <span className="h-[18px] w-full bg-[#ece9d8]" />
        </div>
        <span className="w-0.5 shrink-0 bg-[#ece9d8]" />
        <PartsWindow />
      </main>

      <LevelBar />
      <div role="status" className="flex h-[19px] shrink-0 items-center border-t border-white bg-[#ece9d8] leading-[18px]">
        <span className="flex-1 pl-px">Premi il tasto F1 per la Guida</span>
        <span className="w-[273px]">Portale 1/Livello 9</span>
        <span className="w-[69px] border-l border-[#c5c2b2] pl-1.5">&lt;- 284 -&gt;</span>
        <span className="w-[46px] border-l border-[#c5c2b2] pl-1">-00747</span>
        <span className="w-[47px] border-l border-[#c5c2b2] pl-1">+00559</span>
      </div>
      <TaskBar />
    </div>
  );
}
